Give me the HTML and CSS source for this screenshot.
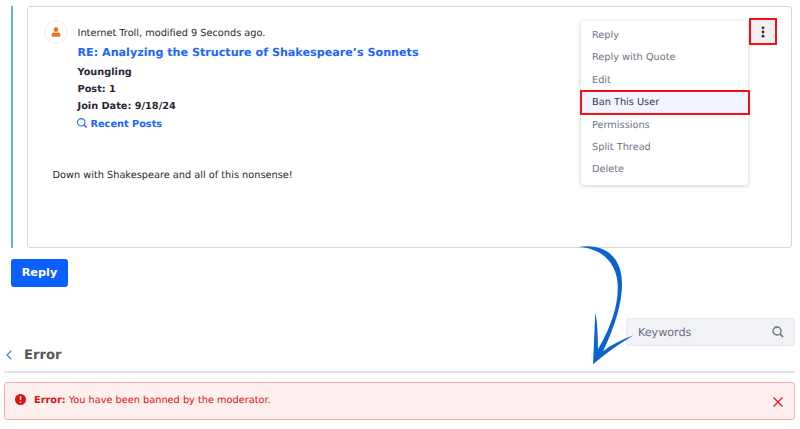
FILE: index.html
```html
<!DOCTYPE html>
<html lang="en">
<head>
<meta charset="utf-8">
<title>Message Boards</title>
<link rel="stylesheet" href="styles.css">
</head>
<body>
<main class="page">
  <section class="thread">
    <article class="card">
      <header class="post-header">
        <span class="avatar">
          <svg width="10" height="11" viewBox="0 0 10 11" fill="#ec7323"><ellipse cx="5" cy="2.500" rx="2.300" ry="2.500"/><path d="M.6 8.200C.6 6 2 5.200 3 5.200c.7.700 3.300.700 4 0 1 0 2.400.8 2.400 3 0 1.200-.5 1.600-1.400 1.600H2C1.100 9.800.6 9.400.6 8.200z"/></svg>
        </span>
        <div class="details">
          <div class="author"><span>Internet Troll, modified 9 Seconds ago.</span></div>
          <a class="title"><span>RE: Analyzing the Structure of Shakespeare’s Sonnets</span></a>
          <div class="meta">Youngling</div>
          <div class="meta">Post: 1</div>
          <div class="meta">Join Date: 9/18/24</div>
          <a class="recent"><svg width="11" height="11" viewBox="0 0 11 11" fill="none" stroke="#1a66ff" stroke-width="1.100"><circle cx="4.300" cy="4.300" r="3.700"/><path d="M7 7l2.600 2.600" stroke-width="1.400"/></svg><span>Recent Posts</span></a>
        </div>
        <button class="kebab" aria-label="Actions"><svg width="4" height="12" viewBox="0 0 4 12" fill="#2b2c36"><circle cx="2" cy="1.800" r="1.400"/><circle cx="2" cy="6" r="1.400"/><circle cx="2" cy="10.200" r="1.400"/></svg></button>
      </header>
      <p class="body-text">Down with Shakespeare and all of this nonsense!</p>
      <ul class="menu">
        <li>Reply</li>
        <li>Reply with Quote</li>
        <li>Edit</li>
        <li class="active">Ban This User</li>
        <li>Permissions</li>
        <li>Split Thread</li>
        <li>Delete</li>
      </ul>
    </article>
  </section>
  <button class="reply">Reply</button>
  <section class="result">
    <div class="search"><span>Keywords</span><svg width="12" height="12" viewBox="0 0 12 12" fill="none" stroke="#6b6c7e" stroke-width="1.300"><circle cx="5" cy="5" r="4"/><path d="M8 8l3 3" stroke-width="1.700"/></svg></div>
    <div class="heading"><svg width="6" height="10" viewBox="0 0 6 10" fill="none" stroke="#3f80ff" stroke-width="1.300"><path d="M5.200.8L1 5l4.200 4.200"/></svg><h1>Error</h1></div>
    <div class="alert">
      <svg width="11" height="11" viewBox="0 0 11 11"><circle cx="5.500" cy="5.500" r="5.500" fill="#da1414"/><path d="M5.500 2.200v3.900M5.500 7.400v1.400" stroke="#feefef" stroke-width="1.500"/></svg>
      <strong>Error:</strong><span class="message">You have been banned by the moderator.</span>
      <svg class="close" width="10" height="10" viewBox="0 0 10 10" stroke="#da1414" stroke-width="1.200"><path d="M.5.5l9 9M9.500.5l-9 9"/></svg>
    </div>
  </section>
  <svg class="arrow" width="60" height="122" viewBox="0 0 60 122" fill="#0b63ce"><path d="M0 2C28-2.500 44 13 44 39 44 57 38 79 25 106.500 33 100 43 95 56 90.300 43 97.500 29 107.500 15 119.300L17.300 67.500C19.800 79 19.700 91 20 104.300 33 82 40 61 39.800 42 39.500 18 24 3 0 2z"/></svg>
</main>
</body>
</html>
```

FILE: styles.css
```css
* { box-sizing: border-box; }
body {
  margin: 0;
  background: #fff;
  color: #272833;
  font: 9.750px/17px "DejaVu Sans", sans-serif;
  text-rendering: geometricPrecision;
}
.page {
  position: relative;
  width: 800px;
  height: 429px;
  padding-top: 6px;
  overflow: hidden;
}
.thread {
  height: 242px;
  margin-left: 11px;
  padding: 0 8px 0 14px;
  border-left: 2px solid #5fb4ef;
}
.card {
  position: relative;
  height: 242px;
  padding: 13px 15px 0 16px;
  border: 1px solid #d5d6de;
  border-radius: 3px;
}
.post-header { display: flex; align-items: flex-start; }
.avatar {
  display: flex;
  align-items: center;
  justify-content: center;
  width: 24px;
  height: 24px;
  margin-left: -.5px;
  border: 1px solid #ebebef;
  border-radius: 50%;
}
.details { flex: 1; padding: 5px 0 0 10px; }
.author { height: 17px; }
.title { display: block; height: 22px; line-height: 22px; font-size: 11.150px; font-weight: bold; color: #1a66ff; }
.meta { height: 17px; font-weight: bold; }
.recent { display: flex; gap: 2px; height: 18px; line-height: 20px; font-weight: bold; color: #1a66ff; }
.recent svg { margin: 3px 0 0 -.5px; }
.recent span { margin-left: .5px; }
.kebab {
  display: flex;
  align-items: center;
  justify-content: center;
  width: 28px;
  height: 27px;
  margin: -2px -.5px 0 0;
  padding: 0;
  border: 2px solid #fb0d12;
  background: #f0f0f0;
}
.body-text { margin: 34px 0 0 8.500px; }
.menu {
  position: absolute;
  top: 14px;
  left: 553px;
  width: 167px;
  height: 164px;
  margin: 0;
  padding: 4px 0 0;
  border-radius: 3px;
  background: #fff;
  box-shadow: 0 1px 4px rgba(39, 40, 51, .24);
  list-style: none;
  color: #727384;
}
.menu li { height: 22.400px; padding-left: 11px; line-height: 22.400px; }
.menu .active {
  position: relative;
  width: 170px;
  height: 25px;
  margin: -2px 0 -.6px -1px;
  padding-left: 10px;
  border: 2px solid #fb0d12;
  background: #f0f5ff;
  line-height: 21.500px;
  color: #393a4a;
}
.reply {
  display: block;
  width: 57px;
  height: 28px;
  margin: 10.500px 0 0 11px;
  padding: 0;
  border: 0;
  border-radius: 3px;
  background: #0b5fff;
  color: #fff;
  font: bold 11.300px/26px "DejaVu Sans", sans-serif;
}
.result { padding: 31.500px 5px 0 4px; }
.search {
  display: flex;
  align-items: center;
  justify-content: space-between;
  width: 169px;
  height: 28px;
  margin-left: auto;
  padding: 0 10px 0 11px;
  border: 1px solid #e7e7ed;
  border-radius: 3px;
  background: #f1f2f5;
  color: #6b6c7e;
  font-size: 11.150px;
}
.heading {
  display: flex;
  align-items: center;
  gap: 12px;
  height: 27px;
  padding: 0 0 7px 2px;
  border-bottom: 2px solid #e3e3e3;
}
.heading h1 { margin: 2px 0 0; color: #585858; font-size: 13.200px; line-height: 18px; }
.alert {
  display: flex;
  align-items: center;
  height: 38px;
  margin-top: 9px;
  padding: 0 11px 3px 10px;
  border: 1px solid #f8a9a9;
  border-radius: 3px;
  background: #feefef;
  color: #da1414;
}
.alert strong { margin: 2px 0 0 8px; }
.alert .message { margin: 2px 0 0 3px; }
.alert .close { margin: 4px 0 0 auto; }
.arrow { position: absolute; top: 245px; left: 578px; }
```
